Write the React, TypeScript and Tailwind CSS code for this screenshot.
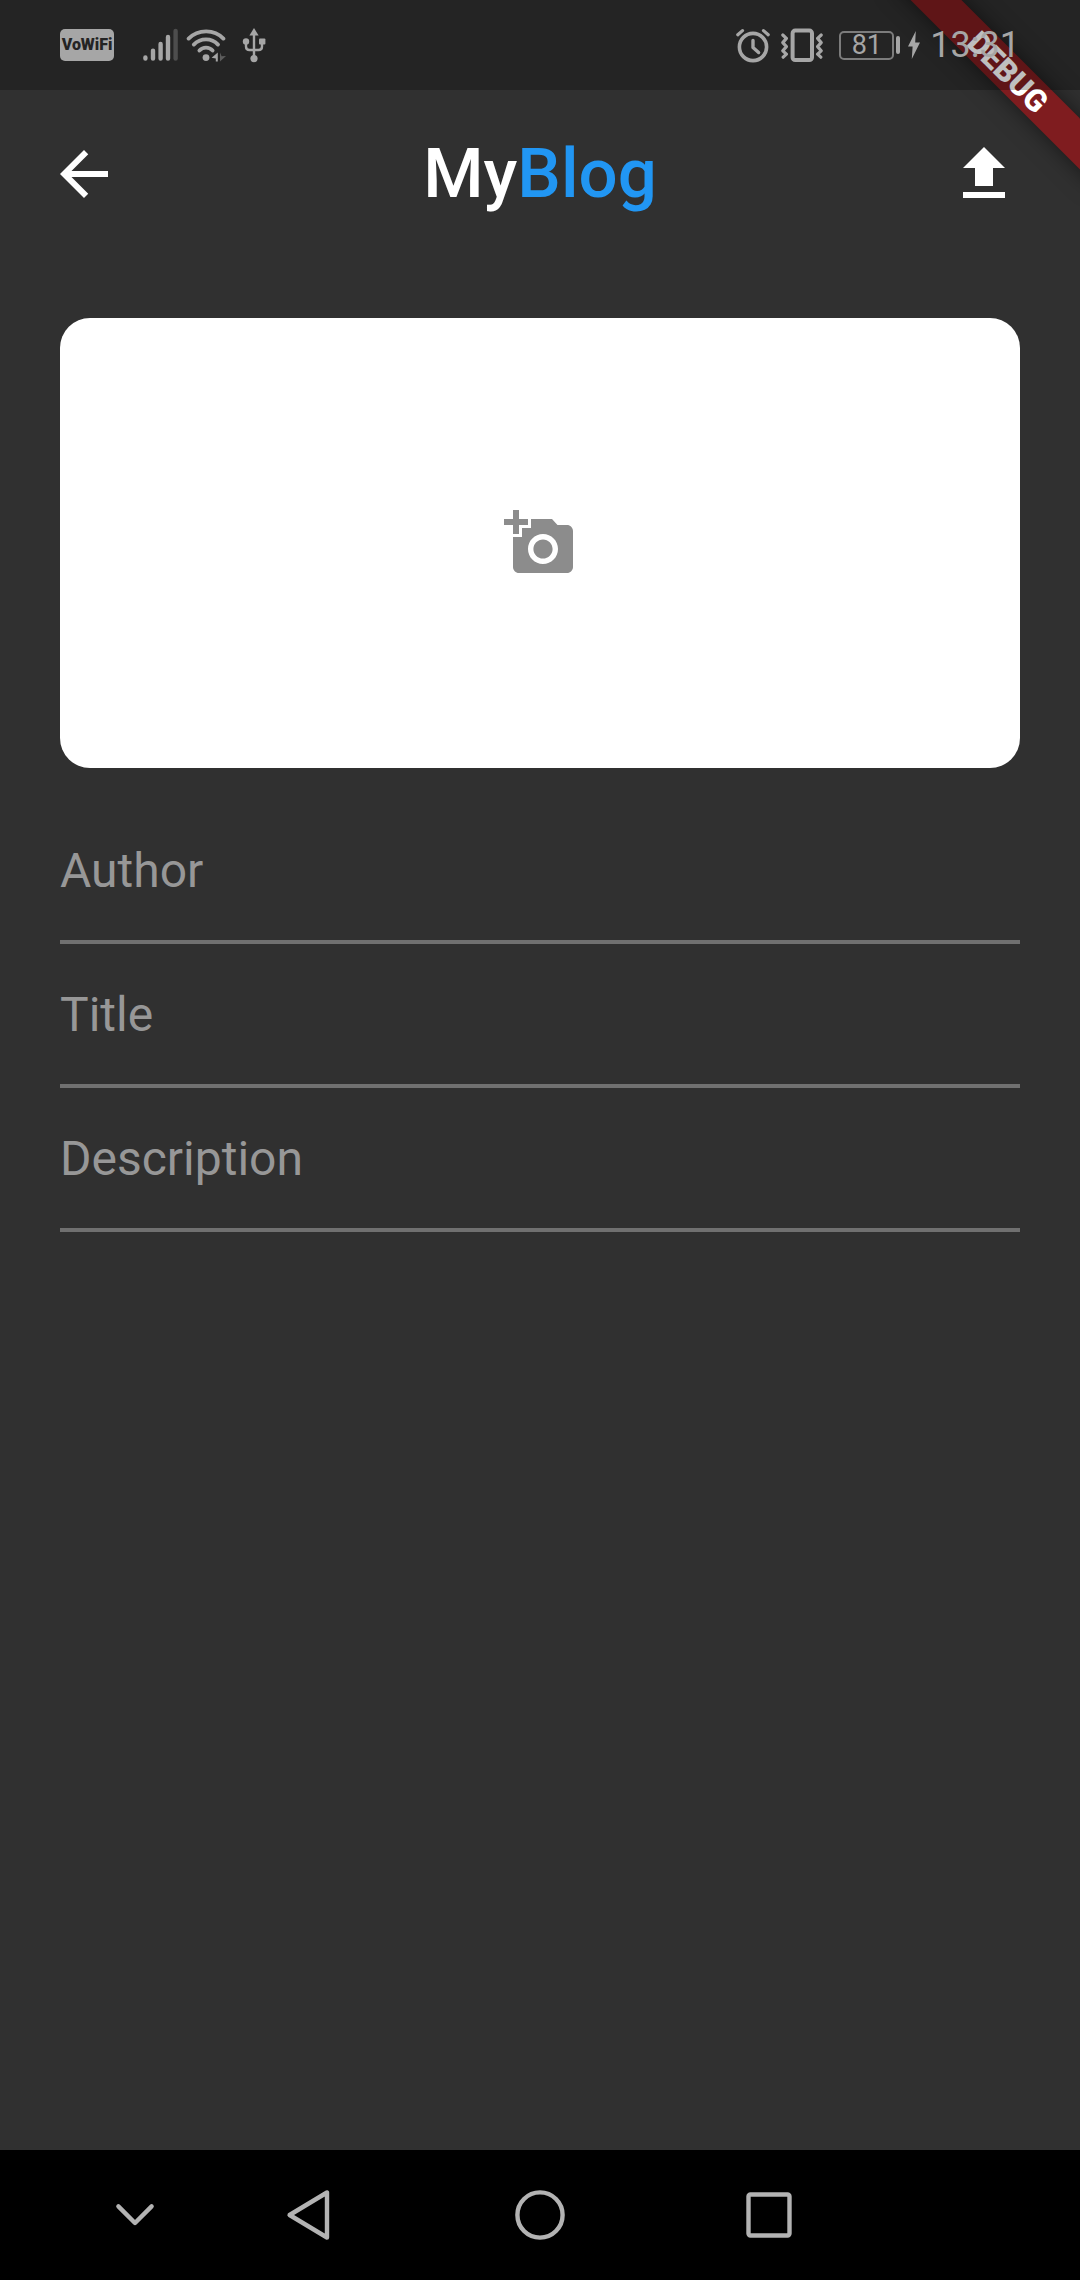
import type { ReactNode } from "react";

function VoWifiBadge() {
  return (
    <span className="flex h-8 w-[54px] items-center justify-center rounded-[5px] bg-[#a6a6a6] font-[Roboto,sans-serif] text-[16px] leading-none font-black text-[#242424]">
      VoWiFi
    </span>
  );
}

function SignalIcon() {
  return (
    <svg className="h-9 w-9" viewBox="0 0 36 36" fill="none" strokeWidth="4.4" strokeLinecap="round" aria-hidden="true">
      <path d="M3.4 30.4v1.2M11 23.6v8M18.6 17v14.600M26 10v21.600" stroke="#a6a6a6" />
      <path d="M33.600 4v27.600" stroke="#4d4d4d" />
    </svg>
  );
}

function WifiIcon() {
  return (
    <svg className="h-9 w-10" viewBox="0 0 40 36" fill="none" stroke="#a6a6a6" strokeWidth="3.8" strokeLinecap="round" aria-hidden="true">
      <path d="M2.600 11.600C12 1.900 28.400 1.900 37.400 11.600" />
      <path d="M7.800 17.600C14.500 10.600 25.600 10.600 32 17.600" />
      <path d="M13.400 23.600C17 19.500 23 19.500 26.600 23.600" />
      <circle cx="20" cy="30.600" r="3.400" fill="#a6a6a6" stroke="none" />
      <path d="M31.800 25.500v9h-2v-3l-4.200-.8z" fill="#a6a6a6" stroke="none" />
      <path d="M34 25.500l1.600 3.800 4.400-.3-6 5.500z" fill="#5c5c5c" stroke="none" />
    </svg>
  );
}

function UsbIcon() {
  return (
    <svg className="h-9 w-6" viewBox="0 0 24 36" aria-hidden="true">
      <path d="M12 5v26M4 15v4.500q0 3.500 3.500 3.500h9q3.500 0 3.500-3.500V15" fill="none" stroke="#a6a6a6" strokeWidth="2.400" />
      <path d="M12 1l4.600 7.600H7.400z" fill="#a6a6a6" />
      <circle cx="4" cy="14.500" r="3.200" fill="#a6a6a6" />
      <rect x="17" y="11.500" width="6.400" height="6" rx="1" fill="#a6a6a6" />
      <circle cx="12" cy="31.600" r="3.600" fill="#a6a6a6" />
    </svg>
  );
}

function AlarmIcon() {
  return (
    <svg className="h-9 w-9" viewBox="0 0 36 36" fill="none" stroke="#a6a6a6" strokeLinecap="round" strokeLinejoin="round" aria-hidden="true">
      <circle cx="18" cy="20" r="13.600" strokeWidth="3.600" />
      <path d="M18 13.500v7l5.600 5" strokeWidth="3.400" />
      <path d="M2.800 7.800L7.500 3.600M33.200 7.800l-4.700-4.200" strokeWidth="3.200" />
    </svg>
  );
}

function VibrateIcon() {
  return (
    <svg className="h-9 w-[42px]" viewBox="0 0 42 36" fill="none" stroke="#a6a6a6" strokeLinecap="round" strokeLinejoin="round" aria-hidden="true">
      <rect x="11.600" y="3.600" width="19.400" height="29.400" rx="2.600" strokeWidth="4" />
      <path d="M1.800 8l3.600 3.400-3.600 4.200 3.600 4-3.600 4.200 3.600 3.400-3.200 3M40.200 8l-3.600 3.400 3.600 4.200-3.600 4 3.600 4.200-3.600 3.400 3.200 3" strokeWidth="3.200" />
    </svg>
  );
}

function Battery() {
  return (
    <div className="flex items-center gap-[2px]">
      <span className="flex h-[29px] w-[55px] items-center justify-center rounded-[5px] border-2 border-[#7c7c7c] text-[27px] leading-none">
        81
      </span>
      <span className="h-[18px] w-1 rounded-full bg-[#a6a6a6]" />
    </div>
  );
}

function BoltIcon() {
  return (
    <svg className="h-7 w-3" viewBox="0 0 12 28" aria-hidden="true">
      <path d="M7.800 0L0 15.600h4.600L3.800 28 12 11.400H7.200z" fill="#a6a6a6" />
    </svg>
  );
}

function StatusBar() {
  return (
    <header className="relative z-20 flex h-[90px] items-center justify-between bg-black/25 px-[60px] text-[#a6a6a6]">
      <div className="flex items-center">
        <VoWifiBadge />
        <div className="ml-7 flex items-center gap-2">
          <SignalIcon />
          <WifiIcon />
        </div>
        <div className="ml-4 flex">
          <UsbIcon />
        </div>
      </div>
      <div className="flex items-center">
        <AlarmIcon />
        <div className="ml-2.5 flex">
          <VibrateIcon />
        </div>
        <div className="ml-4 flex">
          <Battery />
        </div>
        <div className="ml-2 flex">
          <BoltIcon />
        </div>
        <time className="ml-2.5 text-[36px] leading-none font-normal">13:31</time>
      </div>
    </header>
  );
}

function DebugBanner() {
  return (
    <div className="pointer-events-none absolute top-0 right-0 z-10 h-[216px] w-[216px] overflow-hidden">
      <div className="absolute top-[54px] -right-[72px] flex h-9 w-[288px] rotate-45 items-center justify-center bg-[#7f1c1f] text-[31px] leading-none font-black text-white shadow-[0_0_22px_rgba(0,0,0,0.5)]">
        DEBUG
      </div>
    </div>
  );
}

function AppBar() {
  return (
    <div className="grid h-[168px] grid-cols-[1fr_auto_1fr] items-center px-12">
      <button type="button" aria-label="Back" className="justify-self-start text-white">
        <svg className="h-[72px] w-[72px]" viewBox="0 0 24 24" fill="currentColor" aria-hidden="true">
          <path d="M20 11H7.830l5.590-5.590L12 4l-8 8 8 8 1.410-1.410L7.830 13H20v-2z" />
        </svg>
      </button>
      <h1 className="pb-0.5 text-[69px] leading-none font-medium text-white">
        My<span className="text-[#2196f3]">Blog</span>
      </h1>
      <button type="button" aria-label="Upload" className="mr-3 justify-self-end text-white">
        <svg className="h-[72px] w-[72px]" viewBox="0 0 24 24" fill="currentColor" aria-hidden="true">
          <path d="M9 16h6v-6h4l-7-7-7 7h4zm-4 2h14v2H5z" />
        </svg>
      </button>
    </div>
  );
}

function PhotoPicker() {
  return (
    <button type="button" aria-label="Add a photo" className="flex h-[450px] w-full items-center justify-center rounded-[30px] bg-white text-[#8c8c8c]">
      <svg className="h-[72px] w-[72px]" viewBox="0 0 24 24" fill="currentColor" aria-hidden="true">
        <path d="M3 4V1h2v3h3v2H5v3H3V6H0V4h3zm3 6V7h3V4h7l1.830 2H21c1.100 0 2 .9 2 2v12c0 1.100-.9 2-2 2H5c-1.100 0-2-.9-2-2V10h3zm7 9c2.760 0 5-2.240 5-5s-2.240-5-5-5-5 2.240-5 5 2.240 5 5 5zm-3.200-5c0 1.770 1.430 3.200 3.200 3.200s3.200-1.430 3.200-3.200-1.430-3.200-3.200-3.200-3.200 1.430-3.200 3.200z" />
      </svg>
    </button>
  );
}

const fields = ["Author", "Title", "Description"];

function BlogForm() {
  return (
    <form className="mt-8">
      {fields.map((name) => (
        <input
          key={name}
          type="text"
          name={name.toLowerCase()}
          aria-label={name}
          placeholder={name}
          className="block h-36 w-full border-b-4 border-[#707070] bg-transparent text-[48px] text-white outline-none placeholder:text-[#979797]"
        />
      ))}
    </form>
  );
}

function NavButton({ label, children }: { label: string; children: ReactNode }) {
  return (
    <button type="button" aria-label={label}>
      <svg className="h-[54px] w-[54px]" viewBox="0 0 54 54" fill="none" stroke="#b3b3b3" strokeWidth="4.400" strokeLinecap="round" strokeLinejoin="round" aria-hidden="true">
        {children}
      </svg>
    </button>
  );
}

function NavigationBar() {
  return (
    <nav className="grid h-[130px] grid-cols-[2fr_7fr_2fr] items-center bg-black">
      <div className="flex justify-end pr-[34px]">
        <NavButton label="Hide navigation bar">
          <path d="M10.400 18.400L27 35l16.600-16.600" />
        </NavButton>
      </div>
      <div className="flex items-center justify-around">
        <NavButton label="Back">
          <path d="M5.600 27L43 4.500v45z" />
        </NavButton>
        <NavButton label="Home">
          <circle cx="27" cy="27" r="22.600" />
        </NavButton>
        <NavButton label="Recent apps">
          <rect x="6.500" y="6.500" width="41" height="41" rx="2" />
        </NavButton>
      </div>
    </nav>
  );
}

export default function App() {
  return (
    <div className="relative flex min-h-screen flex-col overflow-hidden bg-[#303030] font-[Roboto,sans-serif]">
      <StatusBar />
      <AppBar />
      <main className="flex-1 px-[60px] pt-[60px]">
        <PhotoPicker />
        <BlogForm />
      </main>
      <NavigationBar />
      <DebugBanner />
    </div>
  );
}
